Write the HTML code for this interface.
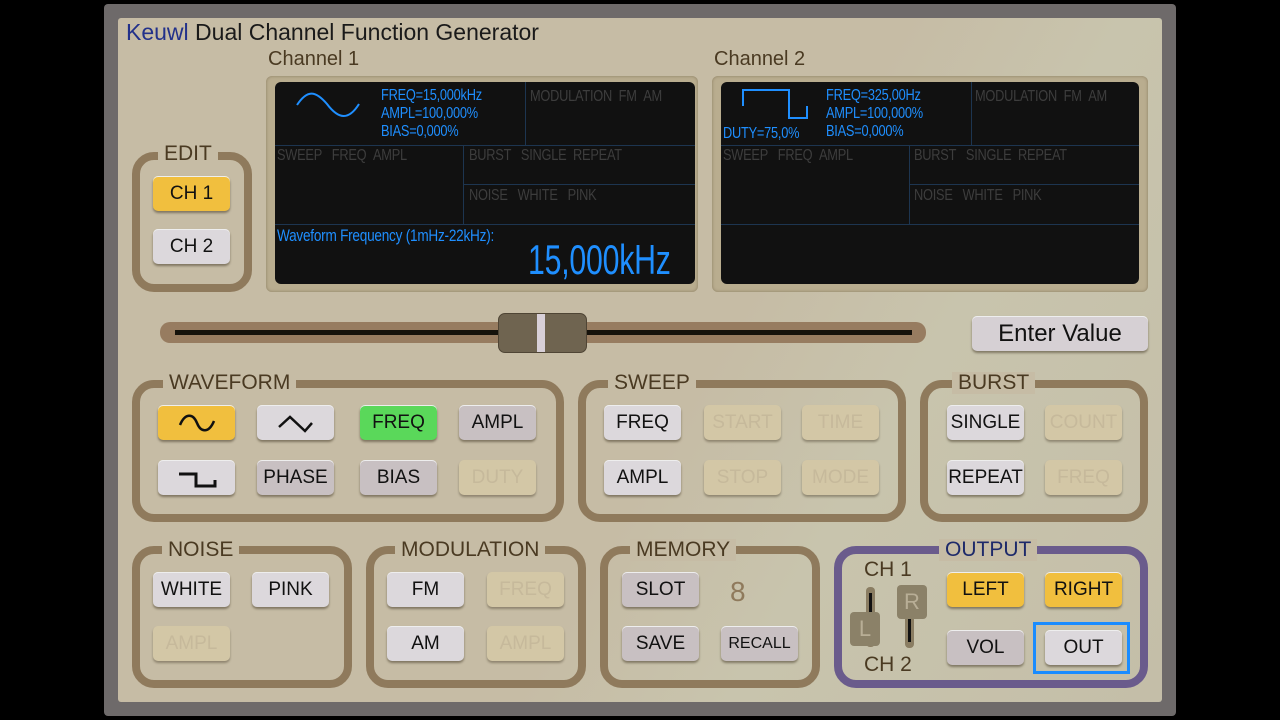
<!DOCTYPE html>
<html><head><meta charset="utf-8"><style>
*{box-sizing:border-box;margin:0;padding:0}
body{width:1280px;height:720px;background:#000;position:relative;overflow:hidden;font-family:"Liberation Sans",sans-serif}
.abs{position:absolute}
#frame{left:104px;top:4px;width:1072px;height:712px;background:#6e6a6a;border-radius:4px}
#panel{left:118px;top:18px;width:1044px;height:684px;background:linear-gradient(120deg,#c6bca5 0%,#c6bca5 55%,#c8c4ad 70%,#c4bea8 100%);border-radius:3px}
.title{left:126px;top:19px;font-size:23px;color:#1a1a1a;white-space:nowrap}
.lbl{font-size:20px;color:#4a3a22}
.bezel{background:#b9ad8f;border-radius:6px;box-shadow:inset 0 0 3px #8a7d60}
.screen{background:#111;border-radius:6px;overflow:hidden}
.scr{font-family:"Liberation Sans",sans-serif;font-size:16px;transform:scaleX(.8);transform-origin:left top;white-space:nowrap;letter-spacing:-0.3px}
.blue{color:#1f8fff}.gray{color:#3d3d3d}
.hl{background:#1d3550;height:1px}.vl{background:#1d3550;width:1px}
.box{border:8px solid #8f7a5c;border-radius:22px}
.gt{background:#c6bca5;font-size:21px;color:#4a3a22;padding:0 6px;line-height:22px}
.btn{width:77px;height:35px;border-radius:5px;background:#dcd8dc;box-shadow:0 2px 2px rgba(60,50,30,.5),inset 0 1px 0 #eee;display:flex;align-items:center;justify-content:center;font-size:19px;color:#111}
.dk{background:#c8c0c2}
.dis{background:#d3c7a6;color:#c6b99b;box-shadow:0 2px 2px rgba(60,50,30,.4)}
.yel{background:#f1bf3e}
.grn{background:#5ad85a}
</style></head><body>
<div id="frame" class="abs"></div>
<div id="panel" class="abs"></div>
<div class="abs title"><span style="color:#22318a">Keuwl</span> Dual Channel Function Generator</div>
<div class="abs lbl" style="left:268px;top:48px">Channel 1</div>
<div class="abs lbl" style="left:714px;top:48px">Channel 2</div>

<!-- Display 1 -->
<div class="abs bezel" style="left:266px;top:76px;width:432px;height:216px"></div>
<div class="abs screen" style="left:275px;top:82px;width:420px;height:202px">
 <svg class="abs" style="left:20px;top:6px" width="68" height="34"><path d="M2 17 C12 2,20 2,32 16 C44 32,54 32,64 16" fill="none" stroke="#1f8fff" stroke-width="2"/></svg>
 <div class="abs scr blue" style="left:106px;top:5px;line-height:18px">FREQ=15,000kHz<br>AMPL=100,000%<br>BIAS=0,000%</div>
 <div class="abs scr gray" style="left:255px;top:6px">MODULATION &nbsp;FM &nbsp;AM</div>
 <div class="abs vl" style="left:250px;top:0;height:63px"></div>
 <div class="abs hl" style="left:0;top:63px;width:420px"></div>
 <div class="abs scr gray" style="left:2px;top:65px">SWEEP &nbsp; FREQ &nbsp;AMPL</div>
 <div class="abs vl" style="left:188px;top:63px;height:79px"></div>
 <div class="abs scr gray" style="left:194px;top:65px">BURST &nbsp; SINGLE &nbsp;REPEAT</div>
 <div class="abs hl" style="left:188px;top:102px;width:232px"></div>
 <div class="abs scr gray" style="left:194px;top:105px">NOISE &nbsp; WHITE &nbsp; PINK</div>
 <div class="abs hl" style="left:0;top:142px;width:420px"></div>
 <div class="abs scr blue" style="left:2px;top:144px;font-size:17px">Waveform Frequency (1mHz-22kHz):</div>
 <div class="abs scr blue" style="left:253px;top:154px;font-size:42px;transform:scaleX(.72)">15,000kHz</div>
</div>

<!-- Display 2 -->
<div class="abs bezel" style="left:712px;top:76px;width:436px;height:216px"></div>
<div class="abs screen" style="left:721px;top:82px;width:418px;height:202px">
 <svg class="abs" style="left:20px;top:6px" width="70" height="34"><path d="M2 18 V2 H48 V30 H66 V18" fill="none" stroke="#1f8fff" stroke-width="2"/></svg>
 <div class="abs scr blue" style="left:2px;top:43px">DUTY=75,0%</div>
 <div class="abs scr blue" style="left:105px;top:5px;line-height:18px">FREQ=325,00Hz<br>AMPL=100,000%<br>BIAS=0,000%</div>
 <div class="abs scr gray" style="left:254px;top:6px">MODULATION &nbsp;FM &nbsp;AM</div>
 <div class="abs vl" style="left:250px;top:0;height:63px"></div>
 <div class="abs hl" style="left:0;top:63px;width:418px"></div>
 <div class="abs scr gray" style="left:2px;top:65px">SWEEP &nbsp; FREQ &nbsp;AMPL</div>
 <div class="abs vl" style="left:188px;top:63px;height:79px"></div>
 <div class="abs scr gray" style="left:193px;top:65px">BURST &nbsp; SINGLE &nbsp;REPEAT</div>
 <div class="abs hl" style="left:188px;top:102px;width:230px"></div>
 <div class="abs scr gray" style="left:193px;top:105px">NOISE &nbsp; WHITE &nbsp; PINK</div>
 <div class="abs hl" style="left:0;top:142px;width:418px"></div>
</div>

<!-- EDIT -->
<div class="abs box" style="left:132px;top:152px;width:120px;height:140px"></div>
<div class="abs gt" style="left:158px;top:143px">EDIT</div>
<div class="abs btn yel" style="left:153px;top:176px">CH 1</div>
<div class="abs btn" style="left:153px;top:229px">CH 2</div>

<!-- slider -->
<div class="abs" style="left:160px;top:322px;width:766px;height:21px;background:#977c60;border-radius:10px"></div>
<div class="abs" style="left:175px;top:330px;width:737px;height:5px;background:#15120b"></div>
<div class="abs" style="left:498px;top:313px;width:89px;height:40px;background:#6f6450;border-radius:7px;border:1px solid #4f4535"></div>
<div class="abs" style="left:537px;top:314px;width:8px;height:38px;background:#d8d0d8"></div>
<div class="abs btn" style="left:972px;top:316px;width:176px;height:35px;font-size:24px;background:#d6d0d4">Enter Value</div>

<!-- WAVEFORM -->
<div class="abs box" style="left:132px;top:380px;width:432px;height:142px"></div>
<div class="abs gt" style="left:163px;top:372px">WAVEFORM</div>
<div class="abs btn yel" style="left:158px;top:405px"><svg width="40" height="24"><path d="M3 14 C8 2,16 2,20 12 C24 22,32 22,37 10" fill="none" stroke="#111" stroke-width="2.5"/></svg></div>
<div class="abs btn" style="left:257px;top:405px"><svg width="40" height="24"><path d="M3 16 L14 6 L29 20 L36 12" fill="none" stroke="#111" stroke-width="2.5"/></svg></div>
<div class="abs btn grn" style="left:360px;top:405px">FREQ</div>
<div class="abs btn dk" style="left:459px;top:405px">AMPL</div>
<div class="abs btn" style="left:158px;top:460px"><svg width="40" height="24"><path d="M2 8 H19 V20 H38 V14" fill="none" stroke="#111" stroke-width="3"/></svg></div>
<div class="abs btn dk" style="left:257px;top:460px">PHASE</div>
<div class="abs btn dk" style="left:360px;top:460px">BIAS</div>
<div class="abs btn dis" style="left:459px;top:460px">DUTY</div>

<!-- SWEEP -->
<div class="abs box" style="left:578px;top:380px;width:328px;height:142px"></div>
<div class="abs gt" style="left:608px;top:372px">SWEEP</div>
<div class="abs btn" style="left:604px;top:405px">FREQ</div>
<div class="abs btn dis" style="left:704px;top:405px">START</div>
<div class="abs btn dis" style="left:802px;top:405px">TIME</div>
<div class="abs btn" style="left:604px;top:460px">AMPL</div>
<div class="abs btn dis" style="left:704px;top:460px">STOP</div>
<div class="abs btn dis" style="left:802px;top:460px">MODE</div>

<!-- BURST -->
<div class="abs box" style="left:920px;top:380px;width:228px;height:142px"></div>
<div class="abs gt" style="left:952px;top:372px">BURST</div>
<div class="abs btn" style="left:947px;top:405px">SINGLE</div>
<div class="abs btn dis" style="left:1045px;top:405px">COUNT</div>
<div class="abs btn" style="left:947px;top:460px">REPEAT</div>
<div class="abs btn dis" style="left:1045px;top:460px">FREQ</div>

<!-- NOISE -->
<div class="abs box" style="left:132px;top:546px;width:220px;height:142px"></div>
<div class="abs gt" style="left:162px;top:539px">NOISE</div>
<div class="abs btn" style="left:153px;top:572px">WHITE</div>
<div class="abs btn" style="left:252px;top:572px">PINK</div>
<div class="abs btn dis" style="left:153px;top:626px">AMPL</div>

<!-- MODULATION -->
<div class="abs box" style="left:366px;top:546px;width:220px;height:142px"></div>
<div class="abs gt" style="left:395px;top:539px">MODULATION</div>
<div class="abs btn" style="left:387px;top:572px">FM</div>
<div class="abs btn dis" style="left:487px;top:572px">FREQ</div>
<div class="abs btn" style="left:387px;top:626px">AM</div>
<div class="abs btn dis" style="left:487px;top:626px">AMPL</div>

<!-- MEMORY -->
<div class="abs box" style="left:600px;top:546px;width:220px;height:142px"></div>
<div class="abs gt" style="left:630px;top:539px">MEMORY</div>
<div class="abs btn dk" style="left:622px;top:572px">SLOT</div>
<div class="abs" style="left:730px;top:576px;font-size:28px;color:#8f7a5c">8</div>
<div class="abs btn dk" style="left:622px;top:626px">SAVE</div>
<div class="abs btn dk" style="left:721px;top:626px;font-size:16px">RECALL</div>

<!-- OUTPUT -->
<div class="abs box" style="left:834px;top:546px;width:314px;height:142px;border-color:#6a5b8c"></div>
<div class="abs gt" style="left:939px;top:539px;color:#1e2a6a">OUTPUT</div>
<div class="abs lbl" style="left:864px;top:558px;font-size:21px">CH 1</div>
<div class="abs lbl" style="left:864px;top:653px;font-size:21px">CH 2</div>
<div class="abs" style="left:866px;top:587px;width:9px;height:60px;background:#8a7d62;border-radius:4px"></div>
<div class="abs" style="left:869px;top:593px;width:3px;height:22px;background:#111"></div>
<div class="abs" style="left:850px;top:612px;width:30px;height:34px;background:#8b8168;border-radius:4px;color:#b8ae96;font-size:22px;text-align:center;line-height:34px">L</div>
<div class="abs" style="left:905px;top:588px;width:9px;height:60px;background:#8a7d62;border-radius:4px"></div>
<div class="abs" style="left:908px;top:618px;width:3px;height:24px;background:#111"></div>
<div class="abs" style="left:897px;top:585px;width:30px;height:34px;background:#8b8168;border-radius:4px;color:#b8ae96;font-size:22px;text-align:center;line-height:34px">R</div>
<div class="abs btn yel" style="left:947px;top:572px">LEFT</div>
<div class="abs btn yel" style="left:1045px;top:572px">RIGHT</div>
<div class="abs btn dk" style="left:947px;top:630px">VOL</div>
<div class="abs" style="left:1033px;top:622px;width:97px;height:52px;border:3px solid #1a8cff"></div>
<div class="abs btn" style="left:1045px;top:630px">OUT</div>
</body></html>
